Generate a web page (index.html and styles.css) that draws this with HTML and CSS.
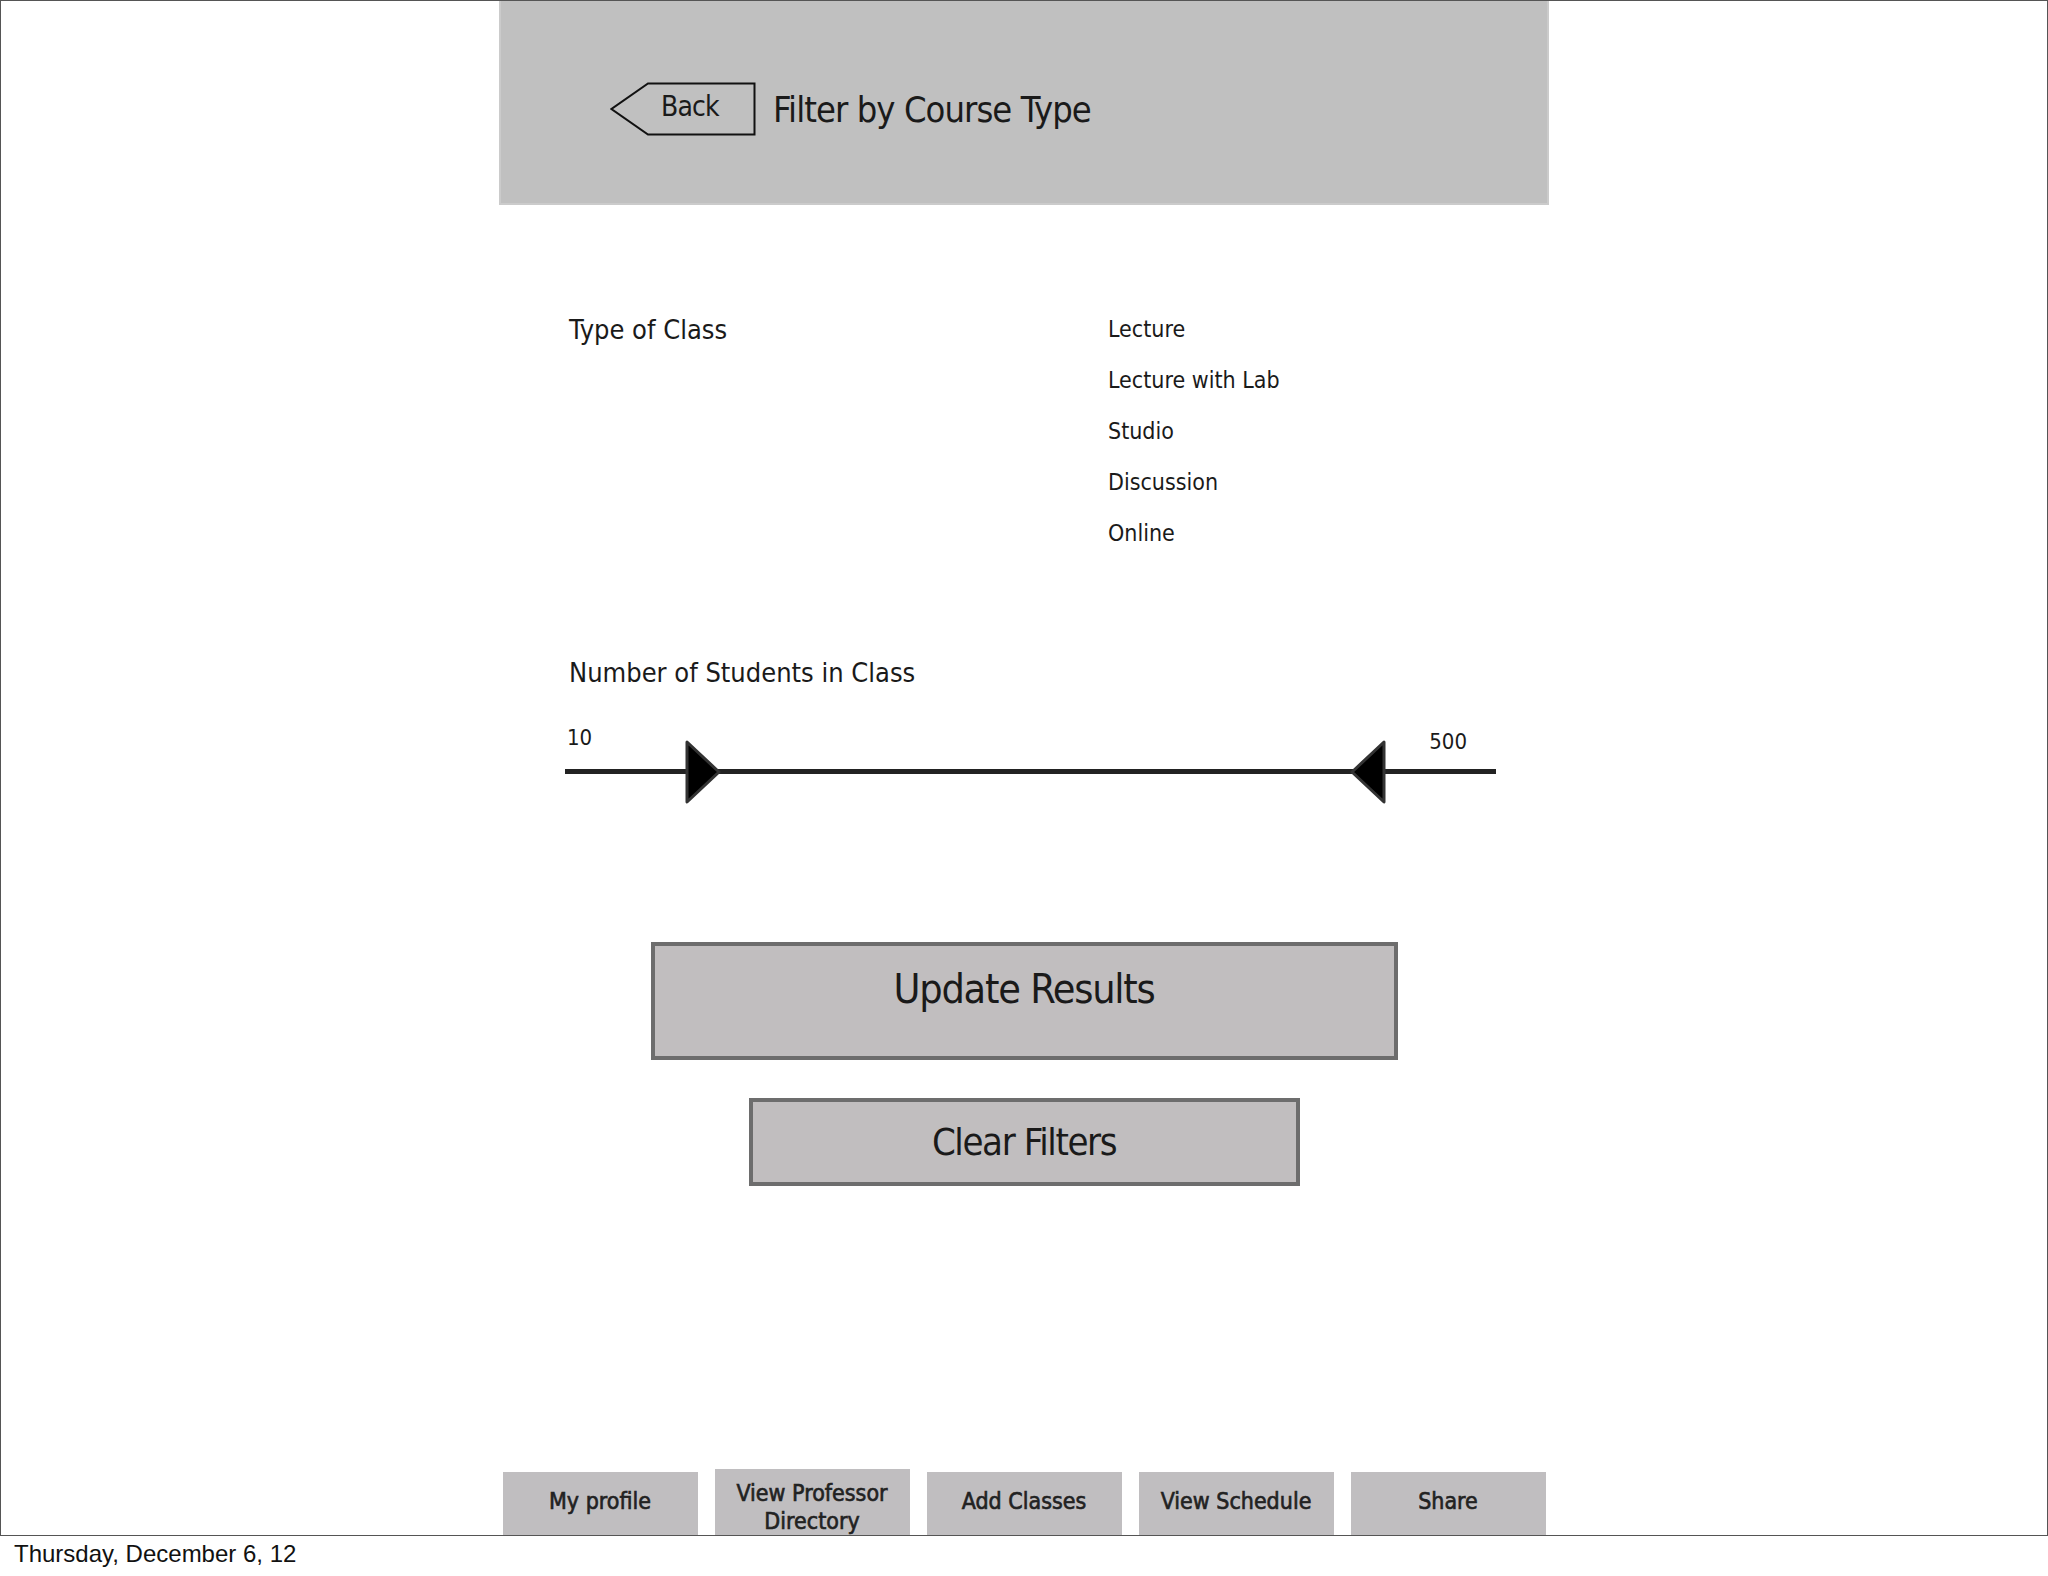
FILE: index.html
```html
<!doctype html>
<html lang="en">
<head>
    <meta charset="UTF-8">
    <title>Filter by Course Type</title>
    <link rel="stylesheet" href="styles.css">
</head>
<body>

<div class="frame">
    <div class="header">
        <div class="back">
            <svg class="back-shape" width="146" height="54" viewBox="0 0 146 54">
                <polygon points="38,1.5 144.5,1.5 144.5,52.5 38,52.5 1.5,27" fill="none" stroke="#111" stroke-width="2"/>
            </svg>
            <span>Back</span>
        </div>
        <h1 class="title">Filter by Course Type</h1>
    </div>

    <div class="panel">
        <div class="type-row">
            <div class="label">Type of Class</div>
            <div class="options">
                <div>Lecture</div>
                <div>Lecture with Lab</div>
                <div>Studio</div>
                <div>Discussion</div>
                <div>Online</div>
            </div>
        </div>

        <div class="label count-label">Number of Students in Class</div>

        <div class="slider">
            <div class="slider-values">
                <span>10</span>
                <span class="max">500</span>
            </div>
            <div class="track"></div>
            <svg class="thumb thumb-min" width="38" height="66" viewBox="0 0 38 66">
                <polygon points="3,3 35,33 3,63" fill="#000" stroke="#333" stroke-width="3" stroke-linejoin="round"/>
            </svg>
            <svg class="thumb thumb-max" width="38" height="66" viewBox="0 0 38 66">
                <polygon points="35,3 3,33 35,63" fill="#000" stroke="#333" stroke-width="3" stroke-linejoin="round"/>
            </svg>
        </div>
    </div>

    <div class="btn btn-update">Update Results</div>
    <div class="btn btn-clear">Clear Filters</div>

    <div class="tabs">
        <div class="tab">My profile</div>
        <div class="tab tab-two">View Professor<br>Directory</div>
        <div class="tab">Add Classes</div>
        <div class="tab">View Schedule</div>
        <div class="tab">Share</div>
    </div>
</div>

<div class="date">Thursday, December 6, 12</div>

</body>
</html>
```

FILE: styles.css
```css
body {
    margin: 0;
    background: #fff;
    color: #1a1a1a;
    font-family: "DejaVu Sans Condensed", "DejaVu Sans", sans-serif;
}

.frame {
    width: 2048px;
    height: 1536px;
    box-sizing: border-box;
    border: 1px solid #555;
    display: flex;
    flex-direction: column;
    align-items: center;
}

.header {
    width: 1050px;
    height: 204px;
    box-sizing: border-box;
    background: #c0c0c0;
    border: 2px solid #cbcbcb;
    border-top: none;
    display: flex;
    align-items: center;
    padding: 14px 0 0 109px;
    gap: 17px;
}

.back {
    position: relative;
    width: 146px;
    height: 54px;
}
.back-shape {
    position: absolute;
    top: 0;
    left: 0;
}
.back span {
    position: relative;
    display: block;
    padding-left: 51px;
    line-height: 50px;
    font-size: 28px;
    letter-spacing: -0.03em;
}

.title {
    margin: 0;
    font-weight: normal;
    font-size: 36px;
    letter-spacing: -0.026em;
}

.panel {
    width: 1050px;
    box-sizing: border-box;
    padding-left: 70px;
}

.type-row {
    margin-top: 99px;
    display: grid;
    grid-template-columns: 539px auto;
}

.label {
    font-size: 27px;
    line-height: 51px;
}

.options {
    font-size: 23px;
    line-height: 51px;
}

.count-label {
    margin-top: 98px;
    line-height: 32px;
}

.slider {
    position: relative;
    width: 931px;
    margin: 34px 0 0 -4px;
}
.slider-values {
    display: flex;
    justify-content: space-between;
    padding: 0 29px 0 2px;
    font-size: 22px;
    line-height: 30px;
}
.slider-values .max {
    padding-top: 4px;
}
.track {
    margin-top: 12px;
    height: 5px;
    background: #222;
}
.thumb {
    position: absolute;
    top: 16px;
}
.thumb-min {
    left: 119px;
}
.thumb-max {
    left: 784px;
}

.btn {
    box-sizing: border-box;
    background: #c1bebf;
    border: 4px solid #6d6d6d;
    text-align: center;
}
.btn-update {
    margin-top: 168px;
    width: 747px;
    height: 118px;
    padding-top: 19px;
    font-size: 41px;
    line-height: 48px;
    letter-spacing: -0.03em;
}
.btn-clear {
    margin-top: 38px;
    width: 551px;
    height: 88px;
    font-size: 38px;
    line-height: 80px;
    letter-spacing: -0.037em;
}

.tabs {
    margin-top: auto;
    display: flex;
    gap: 17px;
}
.tab {
    width: 195px;
    height: 63px;
    box-sizing: border-box;
    padding-top: 15px;
    background: #c0bec0;
    text-align: center;
    font-size: 23px;
    line-height: 28px;
    color: #222;
    -webkit-text-stroke: 0.6px #222;
}
.tab-two {
    height: 66px;
    margin-top: -3px;
    padding-top: 10px;
    overflow: hidden;
}

.date {
    padding-left: 14px;
    line-height: 36px;
    font-size: 24px;
    font-family: "Liberation Sans", Arial, sans-serif;
    color: #111;
}
```
